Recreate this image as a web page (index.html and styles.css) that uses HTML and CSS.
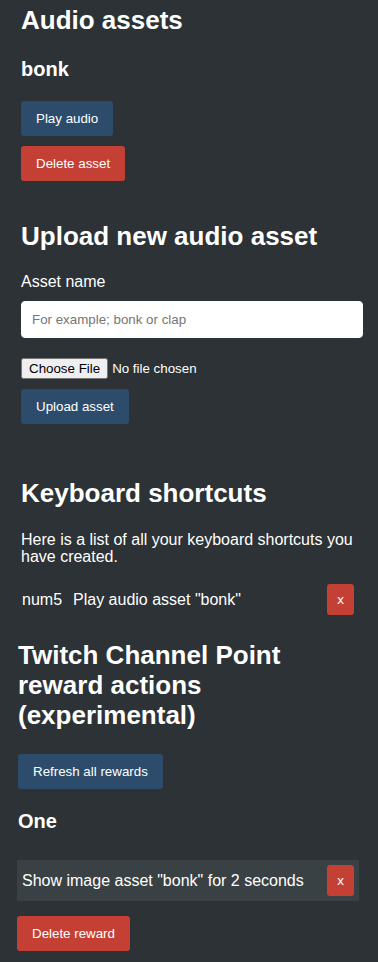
FILE: index.html
```html
<!DOCTYPE html>
<html lang="en">
<head>
    <meta charset="UTF-8">
    <meta name="viewport" content="width=device-width, initial-scale=1.0">
    <title>Stream assets</title>
    <link rel="stylesheet" href="styles.css">
</head>
<body>
    <main class="page">
        <section class="panel assets">
            <h2>Audio assets</h2>
            <div class="asset">
                <h3>bonk</h3>
                <div class="actions">
                    <button class="btn btn-blue">Play audio</button>
                    <button class="btn btn-red">Delete asset</button>
                </div>
            </div>
        </section>

        <section class="panel upload">
            <h2>Upload new audio asset</h2>
            <label class="field-label" for="assetName">Asset name</label>
            <input class="text-input" type="text" id="assetName" placeholder="For example; bonk or clap">
            <input class="file-input" type="file" id="assetFile">
            <button class="btn btn-blue upload-btn">Upload asset</button>
        </section>

        <section class="panel shortcuts">
            <h2>Keyboard shortcuts</h2>
            <p class="intro">Here is a list of all your keyboard shortcuts you have created.</p>
            <div class="row">
                <span class="key">num5</span>
                <span class="row-text">Play audio asset "bonk"</span>
                <button class="btn btn-red btn-small">x</button>
            </div>
        </section>

        <section class="panel rewards">
            <h2>Twitch Channel Point reward actions (experimental)</h2>
            <button class="btn btn-blue refresh-btn">Refresh all rewards</button>
            <div class="reward">
                <h3>One</h3>
                <div class="row row-filled">
                    <span class="row-text">Show image asset "bonk" for 2 seconds</span>
                    <button class="btn btn-red btn-small">x</button>
                </div>
                <button class="btn btn-red delete-reward">Delete reward</button>
            </div>
        </section>
    </main>
</body>
</html>
```

FILE: styles.css
```css
body {
    margin: 0;
    background-color: #2c3235;
    color: #ffffff;
    font-family: "Liberation Sans", Arial, sans-serif;
    font-size: 16px;
}
.page {
    padding-top: 5px;
    padding-bottom: 10px;
}
.panel {
    padding: 0 15px 0 21px;
}
h2 {
    margin: 0;
    font-size: 26px;
    line-height: 30px;
    font-weight: bold;
}
h3 {
    margin: 0;
    font-size: 20px;
    line-height: 23px;
    font-weight: bold;
}
.btn {
    display: inline-block;
    padding: 10px 15px;
    border: none;
    border-radius: 3px;
    color: white;
    font-family: "Liberation Sans", Arial, sans-serif;
    font-size: 13.33px;
    line-height: 15px;
    cursor: pointer;
}
.btn-blue {
    background: #2d4c6b;
}
.btn-red {
    background: #c44035;
}
.btn-small {
    padding: 8px 10px;
}

/* audio assets */
.asset h3 {
    margin: 23px 0 20px;
}
.actions {
    display: flex;
    flex-direction: column;
    align-items: flex-start;
    gap: 10px;
}

/* upload form */
.upload {
    margin-top: 40px;
    display: flex;
    flex-direction: column;
    align-items: flex-start;
}
.field-label {
    margin-top: 22px;
    line-height: 18px;
}
.text-input {
    box-sizing: border-box;
    width: 100%;
    height: 37px;
    margin-top: 10px;
    padding: 0 10px;
    border: 1px solid #ffffff;
    border-radius: 4px;
    font-family: "Liberation Sans", Arial, sans-serif;
    font-size: 13.33px;
}
.text-input::placeholder {
    color: #767676;
}
.file-input {
    margin-top: 20px;
    color: white;
    font-family: "Liberation Sans", Arial, sans-serif;
    font-size: 13.33px;
}
.upload-btn {
    margin-top: 10px;
}

/* keyboard shortcuts */
.shortcuts {
    margin-top: 54px;
}
.intro {
    margin: 23px 0 0;
    line-height: 17px;
}
.row {
    display: flex;
    align-items: center;
    margin: 19px 4px 0 -4px;
    padding: 0 5px;
}
.key {
    margin-right: 11px;
}
.row-text {
    flex: 1;
}

/* rewards */
.rewards {
    margin-top: 25px;
    padding: 0 19px 0 17px;
}
.rewards h2,
.refresh-btn,
.reward h3 {
    margin-left: 1px;
}
.refresh-btn {
    margin-top: 24px;
}
.reward h3 {
    margin-top: 21px;
}
.reward .row {
    margin: 27px 0 0;
}
.row-filled {
    padding: 5px;
    background: #3a4145;
}
.delete-reward {
    margin-top: 15px;
}
```
